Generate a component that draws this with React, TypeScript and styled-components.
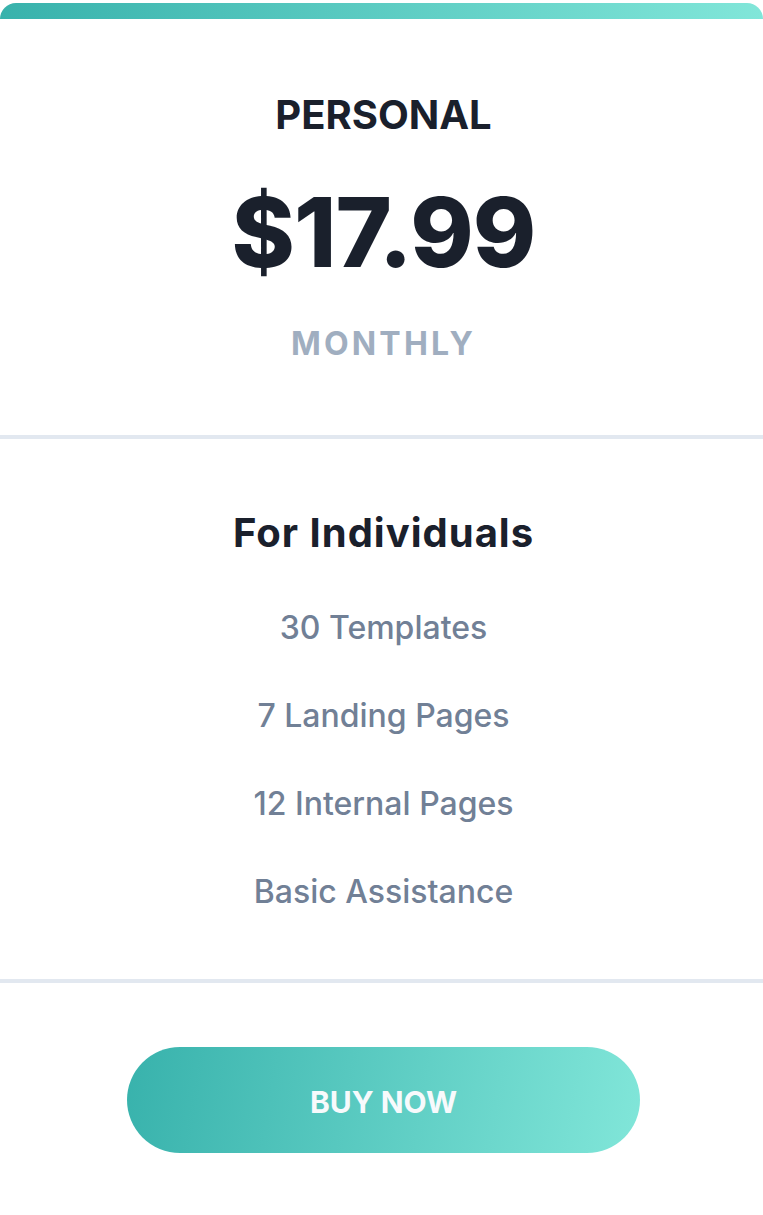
import React from "react";
import styled, { createGlobalStyle } from "styled-components";

const GlobalStyle = createGlobalStyle`
  html, body {
    margin: 0;
    padding: 0;
    background: #ffffff;
  }
  body {
    font-family: Inter, "Noto Sans", "Liberation Sans", sans-serif;
  }
  * { box-sizing: border-box; }
`;

const Page = styled.div`
  padding-top: 3px;
  min-height: 1215px;
`;

const Card = styled.section`
  background: #ffffff;
  border-radius: 16px;
  overflow: hidden;
  min-height: 1240px;
  display: flex;
  flex-direction: column;
  padding-left: 4px;
  position: relative;
`;

const TopBar = styled.div`
  height: 16px;
  margin-left: -4px;
  background: linear-gradient(to right, #38b2ac, #81e6d9);
`;

const Section = styled.div<{ $top: number; $bottom: number }>`
  display: flex;
  flex-direction: column;
  align-items: center;
  padding-top: ${(p) => p.$top}px;
  padding-bottom: ${(p) => p.$bottom}px;
`;

const Divider = styled.hr`
  border: 0;
  margin: 0 0 0 -4px;
  height: 4px;
  background: #e2e8f0;
`;

const PlanName = styled.h2`
  margin: 0;
  font-size: 40px;
  line-height: 40px;
  font-weight: 700;
  color: #1a202c;
`;

const Price = styled.div`
  margin-top: 49px;
  font-size: 96px;
  line-height: 96px;
  font-weight: 800;
  color: #1a202c;
  letter-spacing: -0.01em;
`;

const Period = styled.div`
  margin-top: 48px;
  font-size: 32px;
  line-height: 32px;
  font-weight: 700;
  color: #a0aec0;
  letter-spacing: 0.1em;
`;

const Audience = styled.h3`
  margin: 0;
  font-size: 40px;
  line-height: 40px;
  font-weight: 700;
  color: #1a202c;
  letter-spacing: 0.025em;
`;

const FeatureList = styled.ul`
  list-style: none;
  margin: 0;
  padding: 0;
  display: flex;
  flex-direction: column;
  align-items: center;
  gap: 56px;
  margin-top: 59px;
`;

const Feature = styled.li`
  font-size: 32px;
  line-height: 32px;
  font-weight: 500;
  color: #718096;
`;

const BuyButton = styled.button`
  width: 513px;
  height: 106px;
  border: 0;
  border-radius: 53px;
  background: linear-gradient(100deg, #38b2ac, #81e6d9);
  color: #f7fafc;
  font-family: inherit;
  font-size: 30px;
  font-weight: 700;
  padding-top: 4px;
  cursor: pointer;
`;

const features = ["30 Templates", "7 Landing Pages", "12 Internal Pages", "Basic Assistance"];

export default function App() {
  return (
    <Page>
      <GlobalStyle />
      <Card>
        <TopBar />
        <Section $top={76} $bottom={75}>
          <PlanName>PERSONAL</PlanName>
          <Price>$17.99</Price>
          <Period>MONTHLY</Period>
        </Section>
        <Divider />
        <Section $top={74} $bottom={71}>
          <Audience>For Individuals</Audience>
          <FeatureList>
            {features.map((f) => (
              <Feature key={f}>{f}</Feature>
            ))}
          </FeatureList>
        </Section>
        <Divider />
        <Section $top={64} $bottom={63}>
          <BuyButton>BUY NOW</BuyButton>
        </Section>
      </Card>
    </Page>
  );
}
